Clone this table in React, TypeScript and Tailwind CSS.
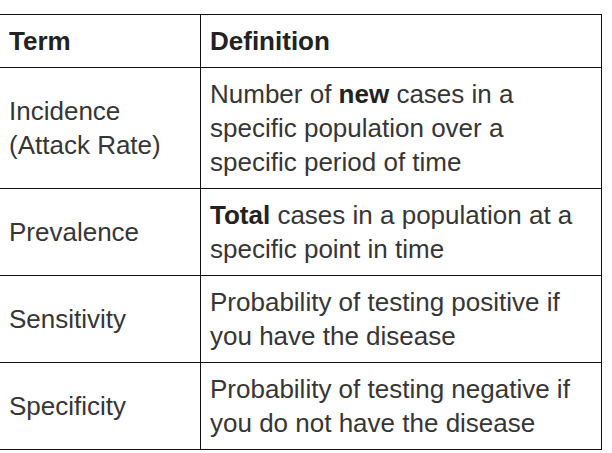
const rows = [
  {
    term: "Incidence (Attack Rate)",
    def: (
      <>
        Number of <strong className="font-bold text-[#222]">new</strong> cases in a specific population over a specific
        period of time
      </>
    ),
  },
  {
    term: "Prevalence",
    def: (
      <>
        <strong className="font-bold text-[#222]">Total</strong> cases in a population at a specific point in time
      </>
    ),
  },
  {
    term: "Sensitivity",
    def: <>Probability of testing positive if you have the disease</>,
  },
  {
    term: "Specificity",
    def: <>Probability of testing negative if you do not have the disease</>,
  },
]

export default function App() {
  return (
    <div className="w-[612px] h-[453px] bg-white overflow-hidden pt-[14px]">
      <table
        className="-ml-px w-[603px] table-fixed border-collapse text-[26px] leading-[34px] text-[#363636]"
        style={{ fontFamily: '"Liberation Sans", Arial, sans-serif' }}
      >
        <colgroup>
          <col className="w-[201px]" />
          <col />
        </colgroup>
        <thead>
          <tr>
            <th className="border border-[#111] px-[9px] py-[9px] text-left font-bold text-[#222]">Term</th>
            <th className="border border-[#111] px-[9px] py-[9px] text-left font-bold text-[#222]">Definition</th>
          </tr>
        </thead>
        <tbody>
          {rows.map((r) => (
            <tr key={r.term}>
              <td className="border border-[#111] px-[9px] py-[9px] align-middle">{r.term}</td>
              <td className="border border-[#111] px-[9px] py-[9px] align-middle">{r.def}</td>
            </tr>
          ))}
        </tbody>
      </table>
    </div>
  )
}
